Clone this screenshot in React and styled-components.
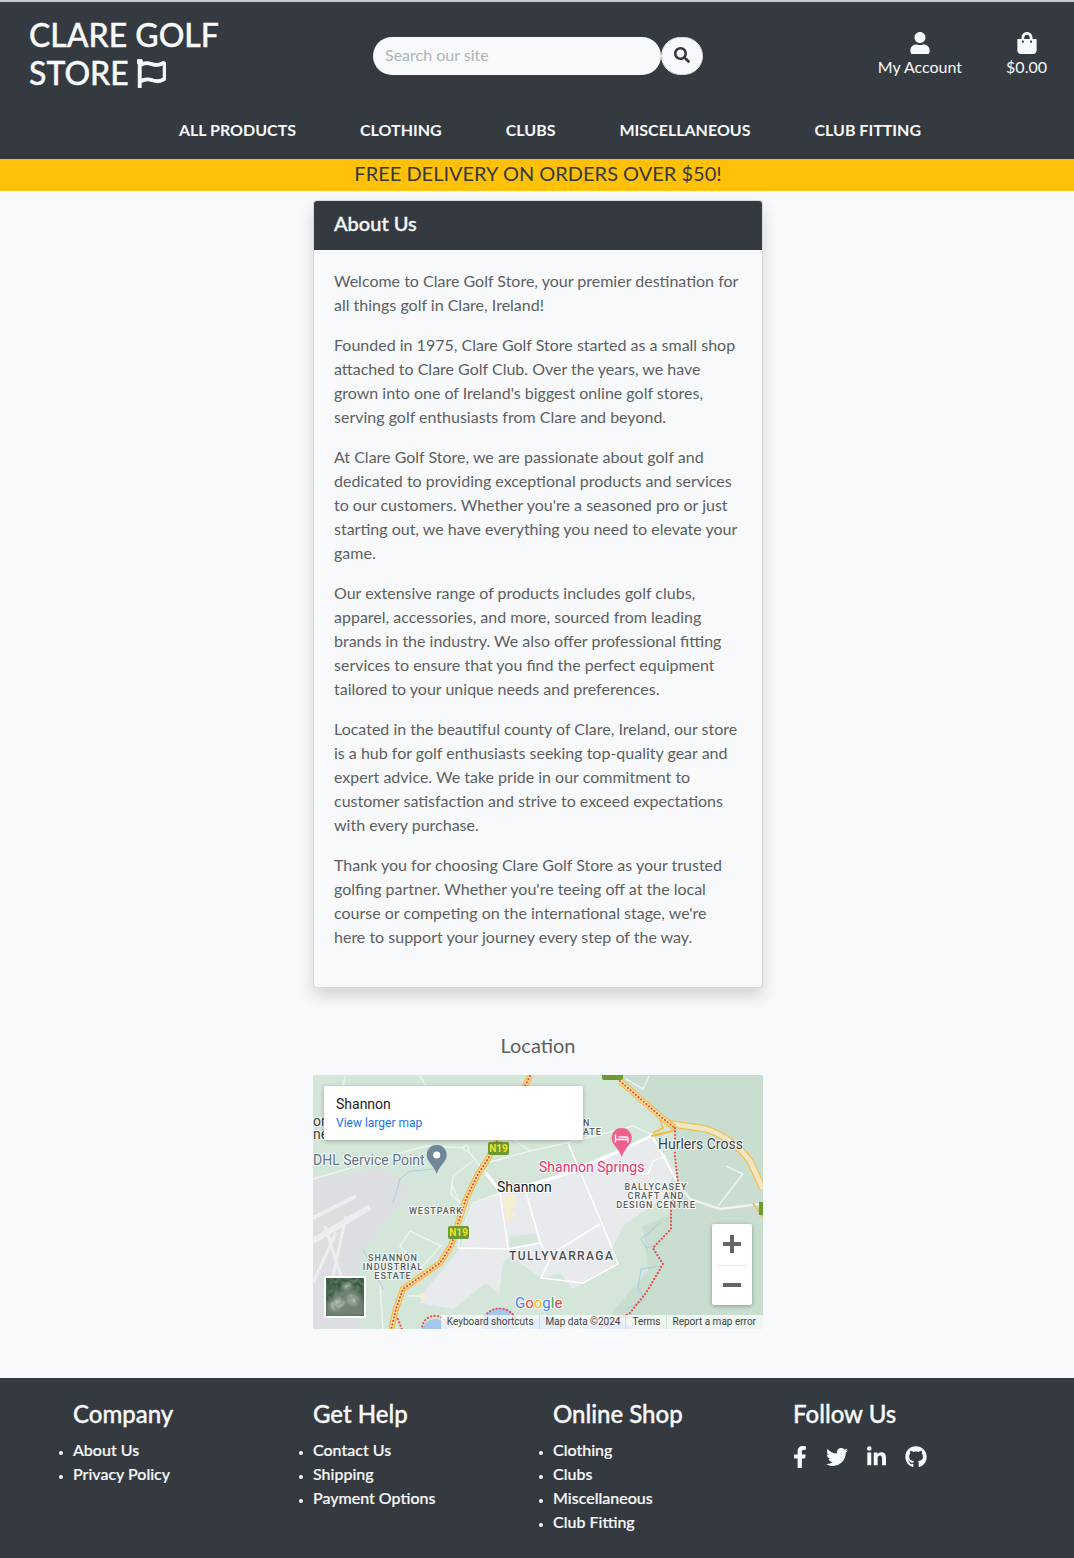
import React from 'react';
import styled, { createGlobalStyle } from 'styled-components';
import { FaRegFlag, FaUser, FaShoppingBag, FaSearch, FaFacebookF, FaTwitter, FaLinkedinIn, FaGithub } from 'react-icons/fa';

const GlobalStyle = createGlobalStyle`
  * { box-sizing: border-box; }
  body {
    margin: 0;
    background: #f8f9fa;
    color: #5c5f62;
    font-family: Lato, "Liberation Sans", sans-serif;
    font-size: 16px;
    line-height: 24px;
  }
`;

const Header = styled.header`
  background: #343a40;
  border-top: 2px solid #c8c9cb;
  height: 159px;
  color: #f8f9fa;
`;

const TopRow = styled.div`
  display: grid;
  grid-template-columns: 358px 358px 358px;
  height: 106px;
`;

const Logo = styled.h1`
  margin: 0;
  padding: 14px 130px 0 29px;
  font-size: 32px;
  line-height: 38px;
  font-weight: 500;
  text-transform: uppercase;
  -webkit-text-stroke: 0.4px #f8f9fa;

  svg {
    vertical-align: -3px;
    font-size: 29px;
    stroke: currentColor;
    stroke-width: 20;
  }
`;

const SearchForm = styled.form`
  display: flex;
  padding: 35px 0 0 15px;
`;

const SearchInput = styled.input`
  width: 288px;
  height: 38px;
  border: 0;
  border-radius: 19px;
  padding: 0 12px 3px;
  background: #f8f9fa;
  font: inherit;
  outline: 0;

  &::placeholder {
    color: #adb5bd;
    opacity: 1;
  }
`;

const SearchButton = styled.button`
  width: 42px;
  height: 38px;
  border: 1px solid #d5d6d8;
  border-radius: 19px;
  background: #f8f9fa;
  color: #343a40;
  padding: 0 0 2px;
  font-size: 16px;
  display: flex;
  align-items: center;
  justify-content: center;
`;

const Actions = styled.div`
  display: flex;
  justify-content: flex-end;
  gap: 44px;
  padding: 30px 27px 0 0;
`;

const Action = styled.a`
  display: flex;
  flex-direction: column;
  align-items: center;
  color: #f8f9fa;
  line-height: 24px;

  svg {
    font-size: 22px;
    margin-bottom: 1px;
  }
`;

const Nav = styled.ul`
  display: flex;
  justify-content: center;
  gap: 64px;
  list-style: none;
  margin: 0;
  padding: 10px 0 0 26px;
`;

const NavLink = styled.a`
  font-weight: 700;
  color: #f8f9fa;
  text-transform: uppercase;
`;

const Banner = styled.div`
  background: #ffc107;
  height: 32px;
  text-align: center;
  font-size: 20px;
  line-height: 28px;
  color: #343a40;
  padding-left: 2px;
`;

const Main = styled.main`
  width: 450px;
  margin: 9px auto 0;
  position: relative;
  left: 1px;
`;

const Card = styled.section`
  background: #f8f9fa;
  border: 1px solid rgba(0, 0, 0, 0.125);
  border-radius: 4px;
  box-shadow: 0 8px 16px rgba(0, 0, 0, 0.15);
  overflow: hidden;
`;

const CardHeader = styled.h2`
  margin: 0;
  height: 49px;
  padding: 0 20px;
  background: #343a40;
  color: #f8f9fa;
  font-size: 20px;
  line-height: 44px;
  font-weight: 500;
  -webkit-text-stroke: 0.35px #f8f9fa;
`;

const CardBody = styled.div`
  padding: 19px 21px 22px 20px;

  p {
    margin: 0 0 16px;
  }
`;

const LocationTitle = styled.h3`
  margin: 45px 0 18px;
  text-align: center;
  font-size: 20px;
  line-height: 24px;
  font-weight: 400;
`;

const MapFrame = styled.div`
  position: relative;
  height: 254px;
  overflow: hidden;
  font-family: Roboto, "Liberation Sans", sans-serif;
`;

const MapArt = styled.svg`
  display: block;
`;

const MapLabel = styled.text`
  font-family: Roboto, "Liberation Sans", sans-serif;
  font-size: ${(p) => p.$size || 14}px;
  letter-spacing: ${(p) => p.$spacing || 0}px;
  fill: ${(p) => p.$color || '#3c4043'};
  font-weight: ${(p) => p.$weight || 400};
  stroke: #fff;
  stroke-width: ${(p) => (p.$plain ? 0 : 2)}px;
  stroke-opacity: 0.8;
  paint-order: stroke;
  text-anchor: ${(p) => p.$anchor || 'start'};
`;

const InfoCard = styled.div`
  position: absolute;
  left: 11px;
  top: 11px;
  width: 259px;
  height: 54px;
  background: #fff;
  border-radius: 2px;
  box-shadow: 0 1px 4px rgba(0, 0, 0, 0.3);
  padding: 9px 12px;
`;

const InfoTitle = styled.div`
  font-size: 14px;
  line-height: 18px;
  margin-bottom: 1px;
  color: #202124;
`;

const InfoLink = styled.a`
  display: block;
  font-size: 12px;
  line-height: 18px;
  color: #1a73e8;
`;

const ZoomBox = styled.div`
  position: absolute;
  right: 11px;
  top: 149px;
  width: 40px;
  height: 81px;
  background: #fff;
  border-radius: 2px;
  box-shadow: 0 1px 4px rgba(0, 0, 0, 0.3);
  display: flex;
  flex-direction: column;
`;

const ZoomButton = styled.div`
  flex: 1;
  display: flex;
  align-items: center;
  justify-content: center;

  & + & {
    position: relative;
    &::before {
      content: '';
      position: absolute;
      top: 0;
      left: 5px;
      right: 5px;
      height: 1px;
      background: #e6e6e6;
    }
  }
`;

const Attribution = styled.div`
  position: absolute;
  right: 0;
  bottom: 0;
  height: 14px;
  display: flex;
  font-size: 10px;
  line-height: 14px;
  color: #444;
`;

const AttrItem = styled.span`
  padding: 0 5px 0 6px;
  background: rgba(255, 255, 255, 0.7);
  white-space: nowrap;
  border-left: ${(p) => (p.$divided ? '1px solid #d8d8d8' : '0')};

  &:last-child {
    padding-right: 7px;
  }
`;

const Footer = styled.footer`
  margin-top: 49px;
  height: 180px;
  background: #343a40;
  color: #f8f9fa;
  display: grid;
  grid-template-columns: repeat(4, 240px);
  padding: 21px 0 0 73px;
`;

const FooterTitle = styled.h4`
  margin: 0 0 9px;
  font-size: 24px;
  line-height: 30px;
  font-weight: 500;
  -webkit-text-stroke: 0.35px #f8f9fa;
`;

const FooterList = styled.ul`
  margin: 0;
  padding: 0;
  font-weight: 500;
  -webkit-text-stroke: 0.2px #f8f9fa;

  li::marker {
    font-size: 11px;
  }
`;

const Socials = styled.div`
  display: flex;
  align-items: center;
  gap: 19px;
  height: 24px;
  margin-top: 16px;
`;

const SocialIcon = styled.a`
  display: flex;
  width: ${(p) => p.$width}px;
  color: #f8f9fa;

  svg {
    width: 100%;
    height: 22px;
  }
`;

const footerColumns = [
  { title: 'Company', links: ['About Us', 'Privacy Policy'] },
  { title: 'Get Help', links: ['Contact Us', 'Shipping', 'Payment Options'] },
  { title: 'Online Shop', links: ['Clothing', 'Clubs', 'Miscellaneous', 'Club Fitting'] },
];

const paragraphs = [
  'Welcome to Clare Golf Store, your premier destination for all things golf in Clare, Ireland!',
  "Founded in 1975, Clare Golf Store started as a small shop attached to Clare Golf Club. Over the years, we have grown into one of Ireland's biggest online golf stores, serving golf enthusiasts from Clare and beyond.",
  "At Clare Golf Store, we are passionate about golf and dedicated to providing exceptional products and services to our customers. Whether you're a seasoned pro or just starting out, we have everything you need to elevate your game.",
  'Our extensive range of products includes golf clubs, apparel, accessories, and more, sourced from leading brands in the industry. We also offer professional fitting services to ensure that you find the perfect equipment tailored to your unique needs and preferences.',
  'Located in the beautiful county of Clare, Ireland, our store is a hub for golf enthusiasts seeking top-quality gear and expert advice. We take pride in our commitment to customer satisfaction and strive to exceed expectations with every purchase.',
  "Thank you for choosing Clare Golf Store as your trusted golfing partner. Whether you're teeing off at the local course or competing on the international stage, we're here to support your journey every step of the way.",
];

const ROUTE_N19 = 'M217 0L175 83 165 98 153 123 145 147 138 170 127 187 90 213 83 233 78 254';
const ROUTE_N18 = 'M307 5L347 40 362 52';
const ROUTE_EAST = 'M353 47L393 53Q420 62 437 85L450 113';
const COUNTY = 'M362 52L362 80 365 107 358 133 358 153 340 172 350 188 333 217 317 237 287 252';

const RoadBadge = ({ x, y }) => (
  <g>
    <rect x={x} y={y} width="21" height="13" rx="2" fill="#6b9a35" />
    <MapLabel x={x + 10.5} y={y + 10} $plain $size={10} $weight={700} $color="#f5e12e" $anchor="middle">N19</MapLabel>
  </g>
);

const SmallLabel = ({ children, ...rest }) => (
  <MapLabel $size={9} $spacing={0.95} $weight={500} $color="#5a5d60" {...rest}>{children}</MapLabel>
);

const MapDrawing = () => (
  <MapArt width="450" height="254" viewBox="0 -1 450 254">
    <defs>
      <filter id="satSpeckle" x="0" y="0" width="100%" height="100%">
        <feTurbulence type="fractalNoise" baseFrequency="0.28" numOctaves="2" seed="4" />
        <feColorMatrix values="0 0 0 0 0.16  0 0 0 0 0.24  0 0 0 0 0.17  1.6 0 0 0 -0.45" />
      </filter>
      <filter id="satBlur" x="-20%" y="-20%" width="140%" height="140%">
        <feGaussianBlur stdDeviation="1.6" />
      </filter>
      <clipPath id="satClip"><rect x="13" y="202" width="38" height="38" /></clipPath>
    </defs>
    <rect y="-1" width="450" height="254" fill="#d4e6da" />
    <path d="M300 -1H450V254H295L300 235 335 195 330 150 355 140 365 100 362 50Z" fill="#c9ddd1" />

    {/* airport */}
    <path d="M0 103L70 92 97 113 77 140 50 173 45 200 45 254H0Z" fill="#dcdee2" />
    <g stroke="#eceef0" fill="none">
      <path d="M57 131L0 165" strokeWidth="6" />
      <path d="M43 120L0 142" strokeWidth="4" />
      <path d="M33 140L20 200M12 150L28 200M0 207L23 157" strokeWidth="3" />
    </g>

    {/* built up areas */}
    <path d="M340 60L362 95 350 122 310 150 295 180 303 190 270 207 260 213 247 197 230 203 197 180 190 187 186 217 173 207 140 233 107 227 110 217 147 173 160 127 187 117 215 110Z" fill="#e8eaed" />
    <path d="M197 160L223 158 225 166 196 172Z" fill="#d4e6da" />
    <path d="M190 119H202L204 130 197 133 203 140 193 145Z" fill="#f5efcf" />
    <path d="M108 217L115 219 112 223 106 221Z" fill="#f5efcf" />

    {/* minor roads */}
    <g stroke="#edf3ef" strokeWidth="1.5" fill="none">
      <path d="M0 103L77 80 113 70 153 72 173 97" />
      <path d="M138 107L147 127 138 118 140 100 160 85" />
      <path d="M97 155L128 170 107 193 87 170Z" />
      <path d="M67 207L70 254M107 0L113 10M32 0L20 63" />
      <path d="M313 3L330 13 336 0" />
      <path d="M413 90L430 98 405 130" />
      <path d="M160 127L187 117M145 172L147 160 160 127M95 220H108" />
      <path d="M173 87L217 75 270 63 320 50 338 58" />
      <path d="M200 63L217 75" />
      <path d="M365 107L377 123 407 133 447 128" strokeWidth="2.4" />
    </g>
    <circle cx="153" cy="72" r="2.6" fill="#d4e6da" stroke="#edf3ef" strokeWidth="1.4" />
    <g stroke="#fff" fill="none">
      <path d="M173 97L187 115 213 110 253 98 300 78 338 60" strokeWidth="3" />
      <path d="M338 58L365 107" strokeWidth="2" />
      <path d="M255 67L290 150 305 188 270 207 228 202 240 177 287 148" strokeWidth="1.5" />
      <path d="M187 117L195 172M213 117L227 165 232 176" strokeWidth="1.5" />
      <path d="M145 172L195 173 227 167" strokeWidth="1.5" />
      <path d="M353 80L340 85 335 98 300 95" strokeWidth="1.2" />
    </g>

    {/* water */}
    <g stroke="#9fc5e8" strokeWidth="0.8" fill="none">
      <path d="M123 93L97 95 87 103 80 127" />
      <path d="M50 173L70 213" />
      <path d="M347 147L328 163 333 172 342 170" />
      <path d="M347 190L328 193 325 213 333 223 313 233" />
    </g>
    <circle cx="122" cy="256" r="13" fill="#a6c6ee" />
    <circle cx="187" cy="250" r="18" fill="#a6c6ee" />
    <circle cx="233" cy="258" r="18" fill="#a6c6ee" />
    <ellipse cx="295" cy="254" rx="25" ry="9" fill="#a6c6ee" />

    {/* motorways */}
    <path d={ROUTE_EAST} stroke="#f5b93c" strokeWidth="7" fill="none" />
    <path d={ROUTE_EAST} stroke="#efe6c4" strokeWidth="5" fill="none" />
    <path d="M340 57L350 52 347 43" stroke="#f5b93c" strokeWidth="1.5" fill="none" />
    <path d="M338 60Q350 58 362 54" stroke="#f5b93c" strokeWidth="2" fill="none" />
    <path d="M440 127L450 141" stroke="#f5b93c" strokeWidth="1.5" fill="none" />
    <path d={ROUTE_N18} stroke="#f5b93c" strokeWidth="6" fill="none" />
    <path d={ROUTE_N18} stroke="#f8e3a8" strokeWidth="4" fill="none" />
    <path d={ROUTE_N19} stroke="#f5b93c" strokeWidth="6" fill="none" />
    <path d={ROUTE_N19} stroke="#f8e3a8" strokeWidth="3.6" fill="none" />

    {/* county border */}
    <g stroke="#ea4a42" strokeWidth="2.1" strokeLinecap="round" strokeDasharray="0.1 3.4" fill="none">
      <path d={ROUTE_N19} />
      <path d={ROUTE_N18} />
      <path d={COUNTY} />
      <path d="M85 243L89 254" />
      <path d="M109 254A13 13 0 0 1 134 248" />
      <path d="M172 240A18 18 0 0 1 203 243" />
    </g>

    <RoadBadge x={175} y={66} />
    <RoadBadge x={135} y={150} />
    <rect x="289" y="-6" width="21" height="10" rx="2" fill="#6b9a35" />
    <rect x="446" y="126" width="4" height="13" fill="#6b9a35" />

    {/* pins */}
    <path d="M123.7 69C117 69 113.7 74 113.7 79C113.7 86 121 89 123.7 98C126.4 89 133.7 86 133.7 79C133.7 74 130.4 69 123.7 69Z" fill="#6f8696" />
    <circle cx="123.7" cy="79" r="3.6" fill="#fff" />
    <path d="M308.7 52C302 52 298.7 57 298.7 62C298.7 69 306 72 308.7 81C311.4 72 318.7 69 318.7 62C318.7 57 315.4 52 308.7 52Z" fill="#f0608f" />
    <path d="M302.5 66.5V58.5M302.5 63.5H315V66.5M305.5 61H313.5Q315 61 315 63" stroke="#fff" strokeWidth="1.4" fill="none" />

    {/* labels */}
    <MapLabel x="0" y="89" $color="#607585">DHL Service Point</MapLabel>
    <MapLabel x="345" y="73" $color="#3c4043">Hurlers Cross</MapLabel>
    <MapLabel x="226" y="96" $color="#e8336d">Shannon Springs</MapLabel>
    <MapLabel x="184" y="116" $color="#202124">Shannon</MapLabel>
    <SmallLabel x="343" y="114" $anchor="middle">BALLYCASEY</SmallLabel>
    <SmallLabel x="343" y="123" $anchor="middle">CRAFT AND</SmallLabel>
    <SmallLabel x="343" y="132" $anchor="middle">DESIGN CENTRE</SmallLabel>
    <SmallLabel x="96" y="138">WESTPARK</SmallLabel>
    <SmallLabel x="80" y="185" $anchor="middle">SHANNON</SmallLabel>
    <SmallLabel x="80" y="194" $anchor="middle">INDUSTRIAL</SmallLabel>
    <SmallLabel x="80" y="203" $anchor="middle">ESTATE</SmallLabel>
    <MapLabel x="196" y="184" $size={12} $spacing={1.4} $weight={500} $color="#4a4d50">TULLYVARRAGA</MapLabel>
    <SmallLabel x="270" y="50">N</SmallLabel>
    <SmallLabel x="270" y="59">ATE</SmallLabel>
    <MapLabel x="0" y="50" $color="#3c4043">or</MapLabel>
    <MapLabel x="0" y="63" $color="#3c4043">ne</MapLabel>
    <MapLabel x="202" y="232" $size={15} $color="#4285f4">
      G<tspan fill="#ea4335">o</tspan><tspan fill="#fbbc05">o</tspan><tspan fill="#4285f4">g</tspan><tspan fill="#34a853">l</tspan><tspan fill="#ea4335">e</tspan>
    </MapLabel>

    {/* satellite toggle */}
    <rect x="11" y="200" width="42" height="42" rx="2" fill="#fff" />
    <g clipPath="url(#satClip)">
      <rect x="13" y="202" width="38" height="38" fill="#35563a" />
      <g filter="url(#satBlur)">
        <path d="M13 228L24 216 35 212 45 216 51 226V240H13Z" fill="#6f7f72" />
        <path d="M29 209L37 206 39 211 31 213ZM16 229L25 221 33 227 22 235ZM36 218L45 222 42 230 34 226Z" fill="#b4bfb5" />
      </g>
      <rect x="13" y="202" width="38" height="38" filter="url(#satSpeckle)" />
    </g>
  </MapArt>
);

const App = () => (
  <>
    <GlobalStyle />
    <Header>
      <TopRow>
        <Logo>Clare Golf Store <FaRegFlag /></Logo>
        <SearchForm>
          <SearchInput placeholder="Search our site" />
          <SearchButton type="button"><FaSearch /></SearchButton>
        </SearchForm>
        <Actions>
          <Action><FaUser />My Account</Action>
          <Action><FaShoppingBag />$0.00</Action>
        </Actions>
      </TopRow>
      <Nav>
        {['All Products', 'Clothing', 'Clubs', 'Miscellaneous', 'Club Fitting'].map((item) => (
          <li key={item}><NavLink>{item}</NavLink></li>
        ))}
      </Nav>
    </Header>
    <Banner>FREE DELIVERY ON ORDERS OVER $50!</Banner>
    <Main>
      <Card>
        <CardHeader>About Us</CardHeader>
        <CardBody>
          {paragraphs.map((text) => <p key={text}>{text}</p>)}
        </CardBody>
      </Card>
      <LocationTitle>Location</LocationTitle>
      <MapFrame>
        <MapDrawing />
        <InfoCard>
          <InfoTitle>Shannon</InfoTitle>
          <InfoLink>View larger map</InfoLink>
        </InfoCard>
        <ZoomBox>
          <ZoomButton>
            <svg width="18" height="18" viewBox="0 0 18 18"><path d="M18 7H11V0H7V7H0V11H7V18H11V11H18Z" fill="#666" /></svg>
          </ZoomButton>
          <ZoomButton>
            <svg width="18" height="18" viewBox="0 0 18 18"><path d="M0 7H18V11H0Z" fill="#666" /></svg>
          </ZoomButton>
        </ZoomBox>
        <Attribution>
          <AttrItem>Keyboard shortcuts</AttrItem>
          <AttrItem $divided>Map data ©2024</AttrItem>
          <AttrItem $divided>Terms</AttrItem>
          <AttrItem $divided>Report a map error</AttrItem>
        </Attribution>
      </MapFrame>
    </Main>
    <Footer>
      {footerColumns.map((col) => (
        <div key={col.title}>
          <FooterTitle>{col.title}</FooterTitle>
          <FooterList>
            {col.links.map((link) => <li key={link}>{link}</li>)}
          </FooterList>
        </div>
      ))}
      <div>
        <FooterTitle>Follow Us</FooterTitle>
        <Socials>
          <SocialIcon $width={14}><FaFacebookF /></SocialIcon>
          <SocialIcon $width={22}><FaTwitter /></SocialIcon>
          <SocialIcon $width={19}><FaLinkedinIn /></SocialIcon>
          <SocialIcon $width={22}><FaGithub /></SocialIcon>
        </Socials>
      </div>
    </Footer>
  </>
);

export default App;
